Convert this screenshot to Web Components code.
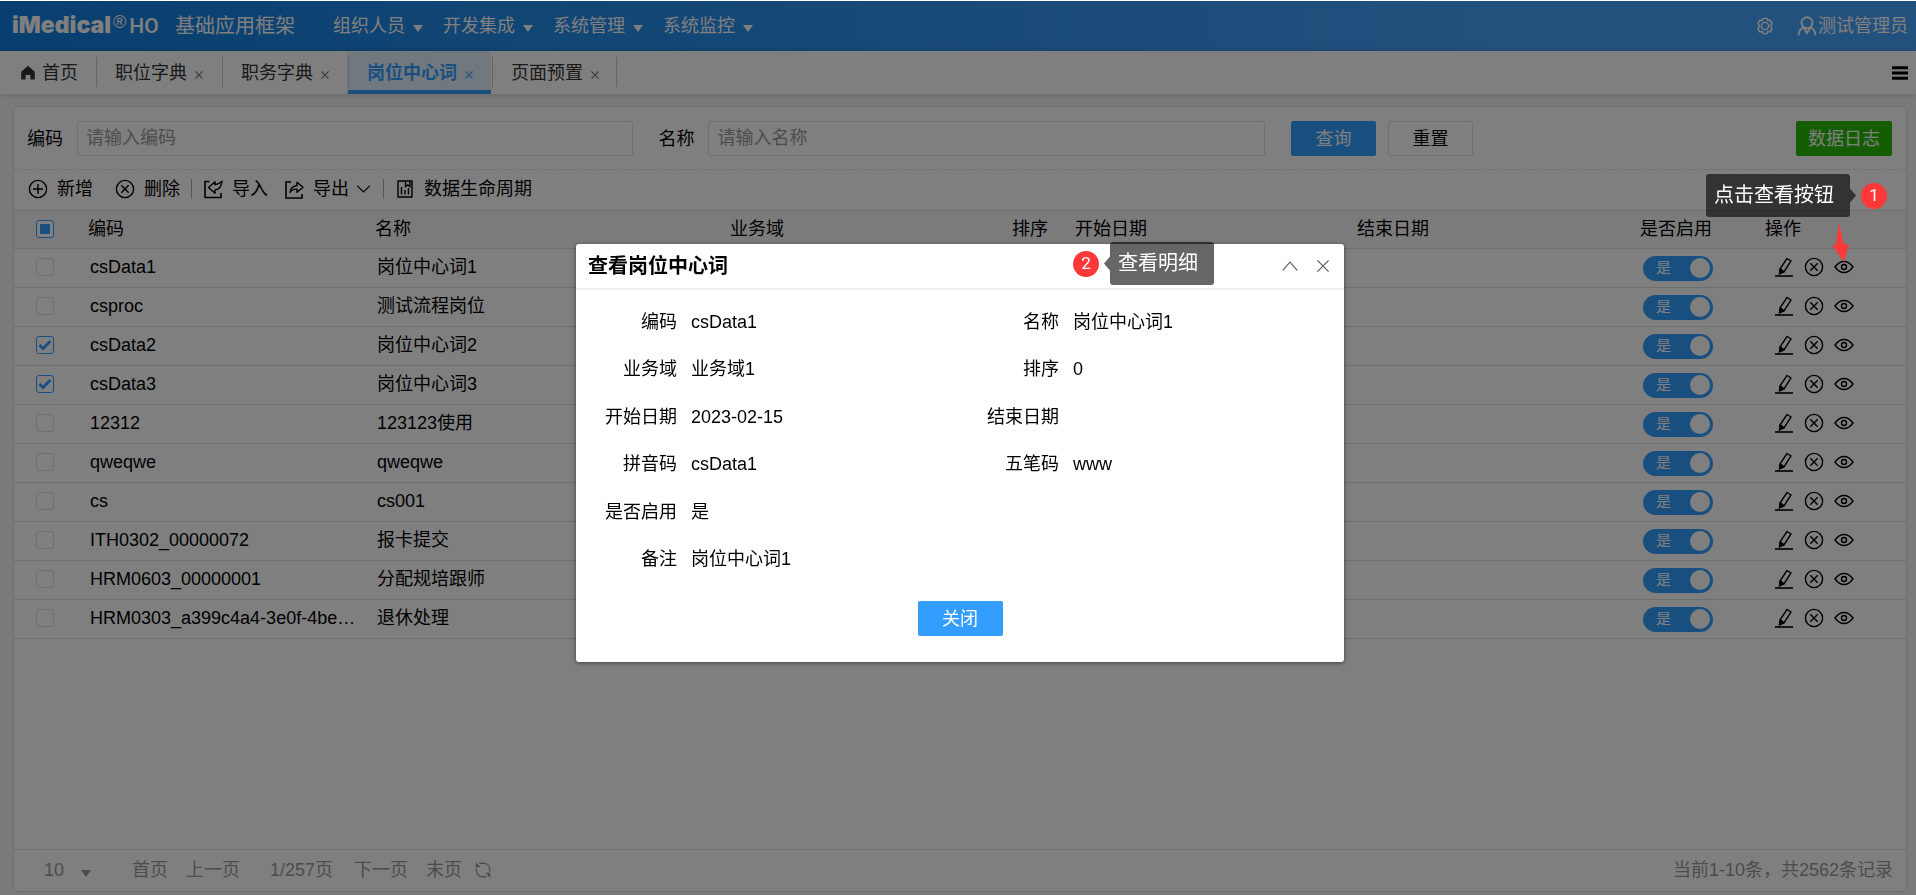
<!DOCTYPE html>
<html lang="zh-CN">
<head>
<meta charset="utf-8">
<title>iMedical HO 基础应用框架</title>
<style>
  html, body { margin: 0; height: 100%; }
  body { background: #fff; font-family: "Liberation Sans", "Noto Sans CJK SC", sans-serif; font-size: 18px; line-height: 24px; color: #000; }
</style>
</head>
<body>
<hi-app></hi-app>
<script>
class HiElement extends HTMLElement {
  connectedCallback() {
    if (this.shadowRoot) return;
    const root = this.attachShadow({ mode: 'open' });
    root.innerHTML = `<style>
      *, *::before, *::after { box-sizing: border-box; }
      button, input, select { font: inherit; color: inherit; margin: 0; }
      button { background: none; border: 0; padding: 0; cursor: pointer; white-space: nowrap; }
      a { color: inherit; text-decoration: none; }
    </style>` + this.render();
  }
}

/* Icons: a name attribute picks the drawing */
const ICONS = {
  plus: '<circle cx="10" cy="10" r="8.6"/><path d="M10 5v10M5 10h10"/>',
  cross: '<circle cx="10" cy="10" r="8.6"/><path d="M6.3 6.3l7.4 7.4M13.7 6.3l-7.4 7.4"/>',
  import: '<path d="M6.5 2.5H2v16h16V14" stroke-width="1.600"/><path d="M5.500 8.500L12 2.800v3q3.500-.3 7-3.500-.8 8-7 8.700v3.300z" stroke-linejoin="round"/>',
  export: '<path d="M7 3H2v16h16v-4" stroke-width="1.600"/><path d="M6 13.500q.5-6 7-7V3.200l6 5-6 5v-3q-4.500-.4-7 3.300z" stroke-linejoin="round"/>',
  chevron: '<path d="M2.500 6.500l7.500 7.500 7.500-7.500" stroke-width="1.300"/>',
  data: '<path d="M3 2h14v16H3zM10.500 2v5.500l2.200-1.700 2.200 1.700V2M6.500 8v7.500M10 11v4.500M13.500 9v6.500"/>',
  pencil: '<path d="M1 19h18" stroke-width="1.600"/><path d="M13 1.500l4 2.500-7 11-4.500 1.800.6-5z M6.300 11.800l3.700 3"/><path d="M6.200 12.500l3 2.300-3.300 1.400z" fill="currentColor"/>',
  eye: '<path d="M1 10q4-5.500 9-5.500t9 5.500q-4 5.500-9 5.500T1 10z"/><circle cx="10" cy="10" r="2.500"/>',
  gear: '<path d="M7.800 1.500h4.400l.8 2.300 2.600-.4 2.200 3.600-1.600 3 1.600 3-2.200 3.600-2.600-.4-.8 2.300H7.800L7 16.200l-2.600.4L2.200 13l1.600-3-1.600-3 2.200-3.600 2.600.4z" stroke-width="1.600"/><circle cx="10" cy="10" r="4" stroke-width="1.600"/>',
  user: '<circle cx="10" cy="6.800" r="5.500" stroke-width="1.900"/><path d="M1.500 19.500q.5-6.500 5-7.800L10 17l3.500-5.300q4.500 1.300 5 7.800" stroke-width="1.900"/>',
  home: '<path d="M10 1L1.500 8.500V18H7v-5.500h6V18h5.500V8.500z" fill="currentColor" stroke="none"/>',
  menu: '<path d="M0 2.500h20M0 10h20M0 17.500h20" stroke-width="4"/>',
  close: '<path d="M3 3l14 14M17 3L3 17"/>',
  x: '<path d="M1 1l18 18M19 1L1 19" stroke-width="3"/>',
  up: '<path d="M1 15.500L10 5l9 10.500"/>',
  caret: '<path d="M0 0h20L10 20z" fill="currentColor" stroke="none"/>',
  refresh: '<path d="M6 2.500h5.500q6 .8 6 8.200v1M14 17.500H8.500q-6-.8-6-8.200v-1"/><path d="M2 1.500v5.500h5.500zM18 18.500V13h-5.500z" fill="currentColor" stroke="none"/>'
};
customElements.define('hi-icon', class extends HiElement {
  render() {
    return `<style>
      :host { display: inline-block; flex: none; width: 20px; height: 20px; }
      svg { display: block; width: 100%; height: 100%; fill: none; stroke: currentColor; stroke-width: 1.400; }
    </style><svg viewBox="0 0 20 20" preserveAspectRatio="none" aria-hidden="true">${ICONS[this.getAttribute('name')]}</svg>`;
  }
});

customElements.define('hi-header', class extends HiElement {
  render() {
    const menus = ['组织人员', '开发集成', '系统管理', '系统监控'];
    return `<style>
      :host { display: flex; align-items: center; height: 50px; padding: 0 8px 0 12px; color: #fff;
        background: linear-gradient(90deg, #107fe0 0%, #45a3fb 80%, #45a3fb 100%); }
      .logo { display: flex; width: 150px; font-weight: bold; line-height: 30px; }
      .name { font-family: Inter, sans-serif; font-weight: 900; font-size: 23px; line-height: 28px; }
      sup { font-size: 18px; line-height: 22px; font-weight: normal; margin: 0 3px 0 2px; }
      .ho { font-family: Roboto, sans-serif; font-weight: 500; font-size: 21px; line-height: 30px; }
      .title { font-size: 20px; margin-left: 13px; }
      nav { display: flex; gap: 20px; margin-left: 38px; flex: 1; }
      nav button { display: flex; align-items: center; gap: 8px; }
      nav hi-icon { width: 10px; height: 7px; margin-top: 4px; }
      .gear { margin-right: 23px; display: flex; }
      .gear hi-icon { width: 18px; height: 18px; }
      .user { display: flex; align-items: center; gap: 1px; }
    </style>
    <div class="logo"><span class="name">iMedical</span><sup>®</sup><span class="ho">HO</span></div>
    <span class="title">基础应用框架</span>
    <nav>${menus.map(m => `<button type="button">${m}<hi-icon name="caret"></hi-icon></button>`).join('')}</nav>
    <button type="button" class="gear" aria-label="设置"><hi-icon name="gear"></hi-icon></button>
    <a class="user" href="#"><hi-icon name="user"></hi-icon>测试管理员</a>`;
  }
});

customElements.define('hi-tabs', class extends HiElement {
  render() {
    const tabs = ['职位字典', '职务字典', '岗位中心词', '页面预置'];
    return `<style>
      :host { display: flex; height: 43px; background: #fff; color: #333; box-shadow: 0 0 6px rgba(0,0,0,.2); position: relative; }
      .home { display: flex; align-items: center; gap: 6px; padding: 0 17px 0 20px; height: 43px; }
      .home hi-icon { width: 16px; height: 16px; }
      .tab { display: flex; align-items: center; height: 43px; padding: 0 18px 0 19px; gap: 8px; position: relative; border-left: 1px solid transparent; }
      .tab::before, .tab:last-of-type::after { content: ""; position: absolute; left: 0; top: 6px; height: 30px; width: 1px; background: #ccc; }
      .tab:last-of-type::after { left: auto; right: 0; }
      .tab button { display: flex; color: #777; padding-top: 4px; }
      .tab button hi-icon { width: 8px; height: 8px; }
      .active { background: #e3f2ff; color: #339eff; font-weight: bold; }
      .active::after { content: ""; position: absolute; left: 0; right: 0; bottom: 0; height: 4px; background: #339eff; }
      .active button { color: #339eff; }
      .more { margin: 0 8px 0 auto; display: flex; align-items: center; color: #000; }
      .more hi-icon { width: 16px; height: 14px; }
    </style>
    <a class="home" href="#"><hi-icon name="home"></hi-icon>首页</a>
    ${tabs.map(t => `<div class="tab${t === '岗位中心词' ? ' active' : ''}"><a href="#">${t}</a><button type="button" aria-label="关闭"><hi-icon name="x"></hi-icon></button></div>`).join('')}
    <button type="button" class="more" aria-label="更多"><hi-icon name="menu"></hi-icon></button>`;
  }
});

/* Push button; kind is primary, plain or success */
customElements.define('hi-button', class extends HiElement {
  render() {
    return `<style>
      :host { display: block; flex: none; }
      button { width: 100%; min-width: 85px; height: 35px; padding: 0 12px; border-radius: 2px; color: #fff; background: #339eff; }
      :host([kind=plain]) button { background: #fff; color: #000; border: 1px solid #ddd; }
      :host([kind=success]) button { background: #28ba05; }
    </style><button type="button"><slot></slot></button>`;
  }
});

customElements.define('hi-search', class extends HiElement {
  render() {
    return `<style>
      :host { display: flex; align-items: center; padding: 14px 14px 13px 13px; border-bottom: 1px dashed #ddd; }
      label { margin-right: 14px; flex: none; }
      input { flex: 5 1 0; min-width: 60px; width: 0; height: 35px; border: 1px solid #ddd; border-radius: 2px; padding: 0 8px; background: #fff; outline: 0; }
      input::placeholder { color: #999; opacity: 1; }
      input + label { margin-left: 25px; }
      .go { margin: 0 12px 0 26px; }
      .space { flex: 3 1 0; }
    </style>
    <label for="code">编码</label><input id="code" placeholder="请输入编码">
    <label for="name">名称</label><input id="name" placeholder="请输入名称">
    <hi-button class="go">查询</hi-button><hi-button kind="plain">重置</hi-button>
    <div class="space"></div>
    <hi-button kind="success">数据日志</hi-button>`;
  }
});

customElements.define('hi-toolbar', class extends HiElement {
  render() {
    return `<style>
      :host { display: flex; align-items: center; height: 40px; padding: 0 14px 3px; }
      button { display: flex; align-items: center; gap: 9px; }
      i { width: 1px; height: 20px; background: #aaa; margin: 0 11px; }
      .gap { margin-left: 22px; }
      .out { margin-left: 16px; }
      .arrow { width: 17px; height: 17px; margin-left: -3px; }
    </style>
    <button type="button"><hi-icon name="plus"></hi-icon>新增</button>
    <button type="button" class="gap"><hi-icon name="cross"></hi-icon>删除</button><i></i>
    <button type="button"><hi-icon name="import"></hi-icon>导入</button>
    <button type="button" class="out"><hi-icon name="export"></hi-icon>导出<hi-icon class="arrow" name="chevron"></hi-icon></button><i></i>
    <button type="button"><hi-icon name="data"></hi-icon>数据生命周期</button>`;
  }
});

/* Tick box with three states: off, checked, some */
customElements.define('hi-checkbox', class extends HiElement {
  render() {
    const s = this.getAttribute('state');
    return `<style>
      :host { display: block; width: 18px; height: 18px; }
      label { display: grid; }
      input, svg { grid-area: 1 / 1; width: 18px; height: 18px; }
      input { appearance: none; border: 1px solid #ddd; border-radius: 3px; background: #fff; }
      :host([state]) input { border-color: #339eff; }
      svg { pointer-events: none; fill: none; stroke: #339eff; }
    </style><label><input type="checkbox" aria-label="选择"${s === 'checked' ? ' checked' : ''}>
    <svg viewBox="0 0 18 18">${s === 'checked' ? '<path d="M3.500 9l3.500 3.500L14.500 5" stroke-width="2.800"/>' : s === 'some' ? '<rect x="4" y="4" width="10" height="10" fill="#339eff" stroke="none"/>' : ''}</svg></label>`;
  }
});

customElements.define('hi-switch', class extends HiElement {
  render() {
    return `<style>
      :host { display: block; width: 70px; height: 25px; }
      label { display: flex; align-items: center; justify-content: space-between; width: 100%; height: 100%; padding: 0 3px 0 13px; border-radius: 13px; background: #339eff; color: #fff; font-size: 15px; line-height: 20px; }
      input { appearance: none; width: 20px; height: 20px; border-radius: 50%; background: #fff; }
    </style><label><slot></slot><input type="checkbox" role="switch" checked></label>`;
  }
});

customElements.define('hi-grid', class extends HiElement {
  render() {
    const rows = [
      ['csData1', '岗位中心词1'], ['csproc', '测试流程岗位'], ['csData2', '岗位中心词2', 1], ['csData3', '岗位中心词3', 1],
      ['12312', '123123使用'], ['qweqwe', 'qweqwe'], ['cs', 'cs001'], ['ITH0302_00000072', '报卡提交'],
      ['HRM0603_00000001', '分配规培跟师'], ['HRM0303_a399c4a4-3e0f-4be…', '退休处理']
    ];
    const widths = [66, 287, 355, 282, 63, 282, 283, 125, 149];
    const heads = ['编码', '名称', '业务域', '排序', '开始日期', '结束日期', '是否启用', '操作'];
    return `<style>
      :host { display: block; flex: 1; border-top: 1px solid #ddd; }
      table { width: 100%; table-layout: fixed; border-collapse: separate; border-spacing: 0; }
      th, td { text-align: left; font-weight: normal; padding: 0 10px 2px; border-bottom: 1px solid #ddd; white-space: nowrap; overflow: hidden; text-overflow: ellipsis; }
      th { height: 38px; padding: 0 8px 2px; background: #f6f6f6; }
      td { height: 39px; }
      td.flag { padding: 0 11px; }
      th:first-child, td:first-child { padding-left: 22px; }
      .ops { display: flex; gap: 10px; padding-left: 7px; }
      .ops button { display: flex; }
    </style>
    <table>
      <colgroup>${widths.map(w => `<col style="width:${w}px">`).join('')}</colgroup>
      <thead><tr><th><hi-checkbox state="some"></hi-checkbox></th>${heads.map(h => `<th>${h}</th>`).join('')}</tr></thead>
      <tbody>${rows.map(([c, n, on]) => `<tr>
        <td><hi-checkbox${on ? ' state="checked"' : ''}></hi-checkbox></td><td>${c}</td><td>${n}</td><td></td><td></td><td></td><td></td>
        <td class="flag"><hi-switch>是</hi-switch></td>
        <td><div class="ops"><button type="button" aria-label="编辑"><hi-icon name="pencil"></hi-icon></button><button type="button" aria-label="删除"><hi-icon name="cross"></hi-icon></button><button type="button" aria-label="查看"><hi-icon name="eye"></hi-icon></button></div></td>
      </tr>`).join('')}</tbody>
    </table>`;
  }
});

customElements.define('hi-pager', class extends HiElement {
  render() {
    return `<style>
      :host { display: flex; align-items: center; height: 42px; padding: 0 13px 2px 30px; border-top: 1px solid #ddd; color: #999; }
      label { display: flex; align-items: center; margin-right: 41px; }
      select { appearance: none; border: 0; background: none; width: 37px; padding: 0; outline: 0; }
      label hi-icon { width: 10px; height: 7px; margin-top: 8px; }
      .prev { margin-left: 18px; }
      .page { margin: 0 21px 0 30px; }
      .last { margin: 0 12px 0 18px; }
      .refresh { display: flex; }
      .refresh hi-icon { width: 18px; height: 18px; }
      .total { margin-left: auto; }
    </style>
    <label><select aria-label="每页条数"><option>10</option></select><hi-icon name="caret"></hi-icon></label>
    <button type="button">首页</button><button type="button" class="prev">上一页</button>
    <span class="page">1/257页</span>
    <button type="button">下一页</button><button type="button" class="last">末页</button>
    <button type="button" class="refresh" aria-label="刷新"><hi-icon name="refresh"></hi-icon></button>
    <span class="total">当前1-10条，共2562条记录</span>`;
  }
});

customElements.define('hi-dialog', class extends HiElement {
  render() {
    const rows = [
      ['编码', 'csData1', '名称', '岗位中心词1'], ['业务域', '业务域1', '排序', '0'],
      ['开始日期', '2023-02-15', '结束日期', ''], ['拼音码', 'csData1', '五笔码', 'www'],
      ['是否启用', '是'], ['备注', '岗位中心词1']
    ];
    return `<style>
      :host { display: block; background: #fff; border-radius: 3px; box-shadow: 0 1px 4px rgba(0,0,0,.5); }
      header { display: flex; align-items: center; height: 46px; padding: 0 13px 0 12px; border-bottom: 2px solid #eee; }
      h2 { margin: 0; font-size: 20px; line-height: 28px; flex: 1; }
      header button { display: flex; color: #555; margin-left: 17px; }
      header hi-icon { width: 16px; height: 16px; }
      dl { display: grid; grid-template-rows: repeat(6, 1fr); height: 285px; margin: 8px 0 0; }
      dl div { display: grid; grid-template-columns: 101px 267px 115px 1fr; align-items: center; }
      dt { text-align: right; }
      dd { margin: 0; padding-left: 14px; }
      footer { display: flex; justify-content: center; padding: 18px 0 26px; }
    </style>
    <header><h2>查看岗位中心词</h2><button type="button" aria-label="收起"><hi-icon name="up"></hi-icon></button><button type="button" aria-label="关闭"><hi-icon name="close"></hi-icon></button></header>
    <dl>${rows.map(r => `<div>${r.map((t, i) => i % 2 ? `<dd>${t}</dd>` : `<dt>${t}</dt>`).join('')}</div>`).join('')}</dl>
    <footer><hi-button>关闭</hi-button></footer>`;
  }
});

/* Numbered guide bubble; side tells where the number stands */
customElements.define('hi-callout', class extends HiElement {
  render() {
    return `<style>
      :host { display: flex; align-items: center; color: #fff; }
      :host([side=left]) { flex-direction: row-reverse; }
      .box { background: rgba(0,0,0,.6); border-radius: 3px; font-size: 20px; line-height: 43px; height: 43px; padding: 0 16px 0 8px; }
      .tip { width: 6px; height: 14px; background: rgba(0,0,0,.6); clip-path: polygon(0 0, 100% 50%, 0 100%); margin-right: 5px; }
      :host([side=left]) .tip { clip-path: polygon(100% 0, 0 50%, 100% 100%); margin: 0 0 0 5px; }
      .num { width: 26px; height: 26px; border-radius: 50%; background: #ff3838; text-align: center; font-size: 17px; line-height: 24px; font-family: Roboto, sans-serif; }
    </style><span class="box"><slot></slot></span><span class="tip"></span><span class="num">${this.getAttribute('step')}</span>`;
  }
});

customElements.define('hi-app', class extends HiElement {
  render() {
    return `<style>
      :host { display: flex; flex-direction: column; min-height: 100%; padding-top: 1px; box-sizing: border-box; }
      main { flex: 1; display: flex; flex-direction: column; padding: 12px 9px 3px 13px; background: #f5f5f5; }
      section { flex: 1; display: flex; flex-direction: column; background: #fff; border: 1px solid #ddd; border-radius: 4px; }
      .mask { position: fixed; inset: 1px 0 0; background: rgba(0,0,0,.5); }
      hi-dialog { position: fixed; left: 576px; top: 244px; width: 768px; }
      hi-callout { position: fixed; }
      .one { right: 29px; top: 174px; }
      .two { left: 1073px; top: 242px; }
      .pointer { position: fixed; right: 66px; top: 223px; width: 18px; height: 39px; fill: #ff3838; }
    </style>
    <hi-header></hi-header><hi-tabs></hi-tabs>
    <main><section><hi-search></hi-search><hi-toolbar></hi-toolbar><hi-grid></hi-grid><hi-pager></hi-pager></section></main>
    <div class="mask"></div>
    <hi-dialog></hi-dialog>
    <hi-callout class="one" step="1">点击查看按钮</hi-callout>
    <hi-callout class="two" step="2" side="left">查看明细</hi-callout>
    <svg class="pointer" viewBox="0 0 18 39"><path d="M7 0L12 22l5-1-5 18L0 22h4z"/></svg>`;
  }
});
</script>
</body>
</html>
